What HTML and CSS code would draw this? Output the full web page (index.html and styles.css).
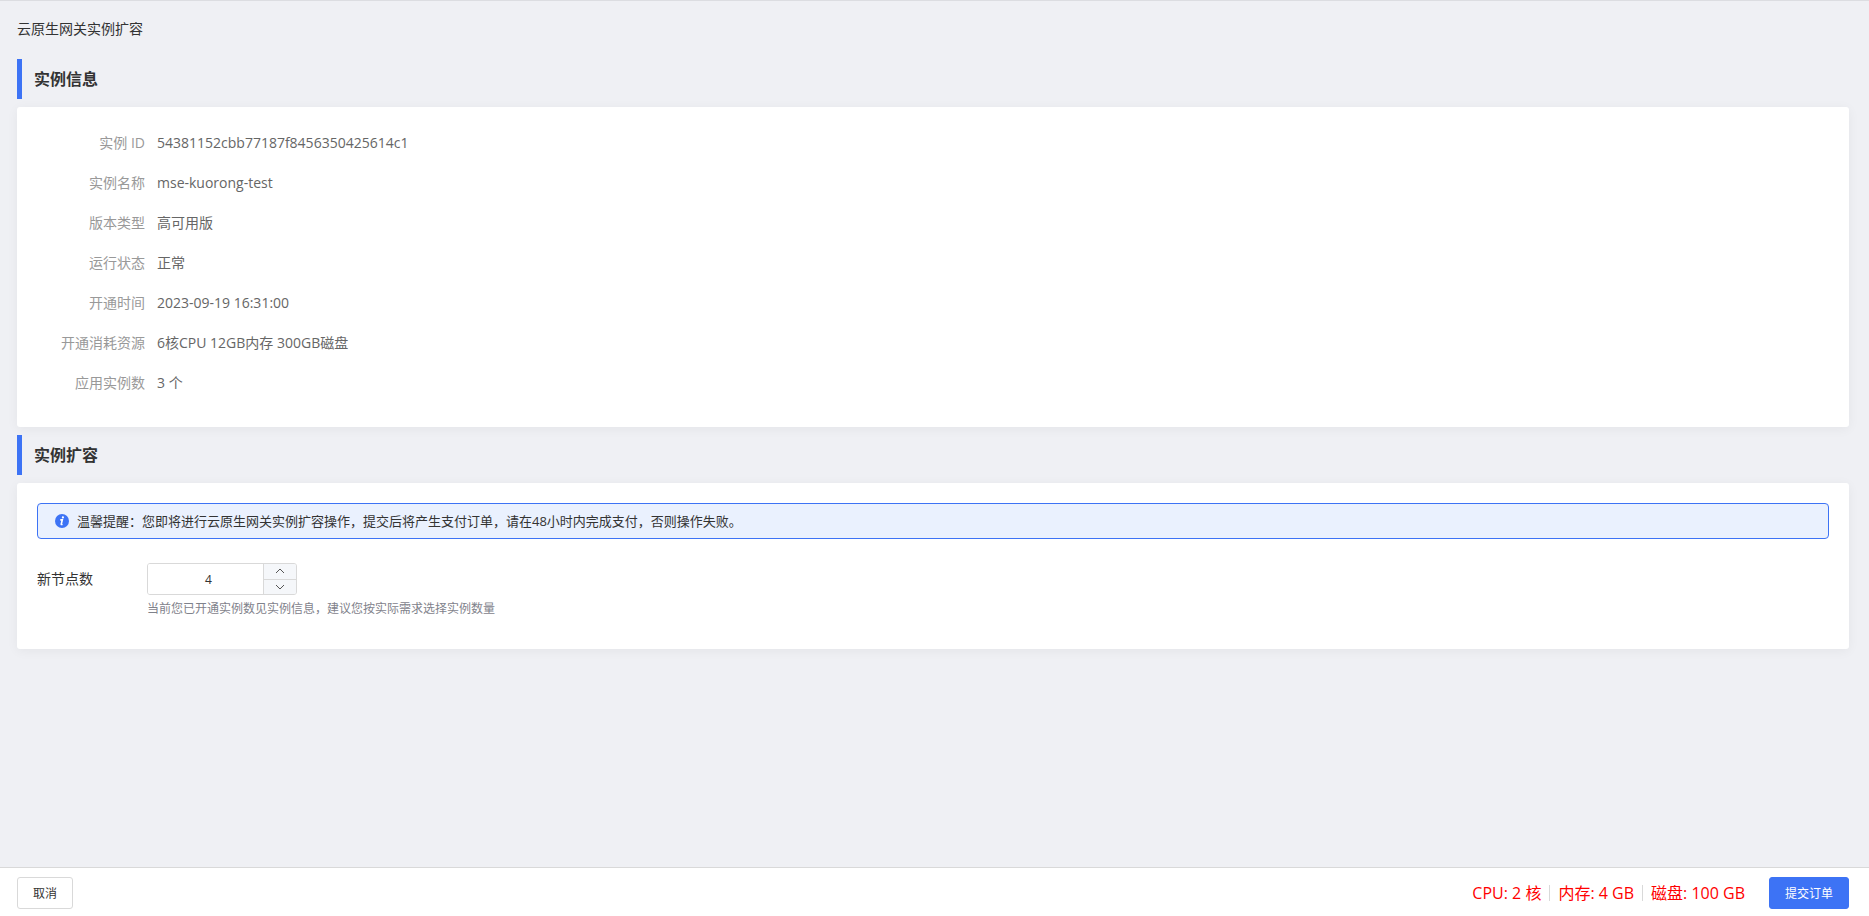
FILE: index.html
```html
<!DOCTYPE html>
<html lang="zh-CN">
<head>
    <meta charset="UTF-8">
    <meta name="viewport" content="width=device-width, initial-scale=1.0">
    <title>云原生网关实例扩容</title>
    <link rel="stylesheet" href="styles.css">
</head>
<body>
    <main class="container">
        <h1 class="page-title">云原生网关实例扩容</h1>

        <h2 class="section-title">实例信息</h2>
        <div class="card">
            <dl class="info">
                <div class="info-row"><dt>实例 ID</dt><dd>54381152cbb77187f8456350425614c1</dd></div>
                <div class="info-row"><dt>实例名称</dt><dd>mse-kuorong-test</dd></div>
                <div class="info-row"><dt>版本类型</dt><dd>高可用版</dd></div>
                <div class="info-row"><dt>运行状态</dt><dd>正常</dd></div>
                <div class="info-row"><dt>开通时间</dt><dd>2023-09-19 16:31:00</dd></div>
                <div class="info-row"><dt>开通消耗资源</dt><dd>6核CPU 12GB内存 300GB磁盘</dd></div>
                <div class="info-row"><dt>应用实例数</dt><dd>3 个</dd></div>
            </dl>
        </div>

        <h2 class="section-title">实例扩容</h2>
        <div class="card">
            <div class="alert">
                <svg class="alert-icon" viewBox="0 0 14 14" aria-hidden="true">
                    <circle cx="7" cy="7" r="7" fill="#3d73f5"/>
                    <circle cx="7.9" cy="3.4" r="1.1" fill="#fff"/>
                    <path d="M5.3 5.9h2L6.3 10q-.2 1 1.2.2" fill="none" stroke="#fff" stroke-width="1.6"/>
                </svg>
                <p>温馨提醒：您即将进行云原生网关实例扩容操作，提交后将产生支付订单，请在48小时内完成支付，否则操作失败。</p>
            </div>
            <div class="form-item">
                <label for="node-count">新节点数</label>
                <div class="form-content">
                    <div class="input-number">
                        <input id="node-count" type="text" inputmode="numeric" value="4">
                        <div class="steps">
                            <button type="button" id="increase" aria-label="增加">
                                <svg viewBox="0 0 10 6"><path d="M1 5l4-4 4 4"/></svg>
                            </button>
                            <button type="button" id="decrease" aria-label="减少">
                                <svg viewBox="0 0 10 6"><path d="M1 1l4 4 4-4"/></svg>
                            </button>
                        </div>
                    </div>
                    <p class="tip">当前您已开通实例数见实例信息，建议您按实际需求选择实例数量</p>
                </div>
            </div>
        </div>
    </main>

    <footer>
        <button type="button" class="btn">取消</button>
        <div class="order">
            <ul class="cost">
                <li>CPU: 2 核</li>
                <li>内存: 4 GB</li>
                <li>磁盘: 100 GB</li>
            </ul>
            <button type="button" class="btn btn-primary">提交订单</button>
        </div>
    </footer>

    <script>
        const nodeCount = document.getElementById("node-count");

        function step(n) {
            nodeCount.value = Math.max(1, (parseInt(nodeCount.value, 10) || 0) + n);
        }

        document.getElementById("increase").addEventListener("click", () => step(1));
        document.getElementById("decrease").addEventListener("click", () => step(-1));
    </script>
</body>
</html>
```
FILE: styles.css
```css
* {
    margin: 0;
    padding: 0;
    box-sizing: border-box;
}

body {
    background: #eff0f4;
    color: #333;
    font-family: "Open Sans", "Noto Sans CJK SC", sans-serif;
    font-size: 14px;
    min-height: 100vh;
    display: flex;
    flex-direction: column;
    border-top: 1px solid #dcdde1;
}

button,
input {
    font-family: inherit;
}

.container {
    flex: 1;
    padding: 18px 20px 20px 17px;
}

.page-title {
    font-size: 14px;
    font-weight: normal;
    line-height: 20px;
    margin-bottom: 20px;
}

.section-title {
    border-left: 5px solid #3d73f5;
    padding-left: 12px;
    margin-bottom: 8px;
    font-size: 16px;
    font-weight: bold;
    line-height: 40px;
}

.card {
    background: #fff;
    border-radius: 3px;
    box-shadow: 0 2px 12px rgba(0, 0, 0, 0.05);
    padding: 20px;
    margin-bottom: 8px;
}

.info-row {
    display: flex;
    line-height: 32px;
    margin-bottom: 8px;
}

.info-row dt {
    width: 108px;
    margin-right: 12px;
    text-align: right;
    color: #999;
}

.info-row dd {
    color: #666;
}

.alert {
    display: flex;
    align-items: center;
    gap: 8px;
    padding: 8px 17px;
    margin-bottom: 24px;
    background: #eaf1fe;
    border: 1px solid #3d73f5;
    border-radius: 4px;
    font-size: 13px;
    line-height: 18px;
}

.alert-icon {
    width: 14px;
    height: 14px;
}

.form-item {
    display: flex;
}

.form-item label {
    width: 110px;
    line-height: 32px;
}

.input-number {
    display: flex;
    width: 150px;
    height: 32px;
    border: 1px solid #d9d9d9;
    border-radius: 3px;
    overflow: hidden;
}

.input-number input {
    flex: 1;
    min-width: 0;
    border: none;
    outline: none;
    padding: 0 8px 0 14px;
    text-align: center;
    font-size: 12px;
    color: #333;
    background: #fff;
}

.steps {
    display: flex;
    flex-direction: column;
    width: 33px;
    border-left: 1px solid #d9d9d9;
}

.steps button {
    flex: 1;
    display: flex;
    align-items: center;
    justify-content: center;
    border: none;
    background: #f5f7fa;
    cursor: pointer;
}

.steps button + button {
    border-top: 1px solid #d9d9d9;
}

.steps svg {
    width: 10px;
    height: 6px;
    fill: none;
    stroke: #555;
}

.tip {
    margin-top: 4px;
    margin-bottom: 10px;
    font-size: 12px;
    line-height: 20px;
    color: #7f828b;
}

footer {
    display: flex;
    align-items: center;
    justify-content: space-between;
    padding: 9px 20px 7px 17px;
    background: #fff;
    border-top: 1px solid #d9d9d9;
}

.order {
    display: flex;
    align-items: center;
    gap: 24px;
}

.cost {
    display: flex;
    list-style: none;
    font-size: 16px;
    line-height: 16px;
    color: #f00;
}

.cost li + li {
    margin-left: 8px;
    padding-left: 8px;
    border-left: 1px solid #d9d9d9;
}

.btn {
    height: 32px;
    padding: 0 15px;
    border: 1px solid #d9d9d9;
    border-radius: 3px;
    background: #fff;
    color: #333;
    font-size: 12px;
    cursor: pointer;
}

.btn-primary {
    background: #3d73f5;
    border-color: #3d73f5;
    color: #fff;
}
```
